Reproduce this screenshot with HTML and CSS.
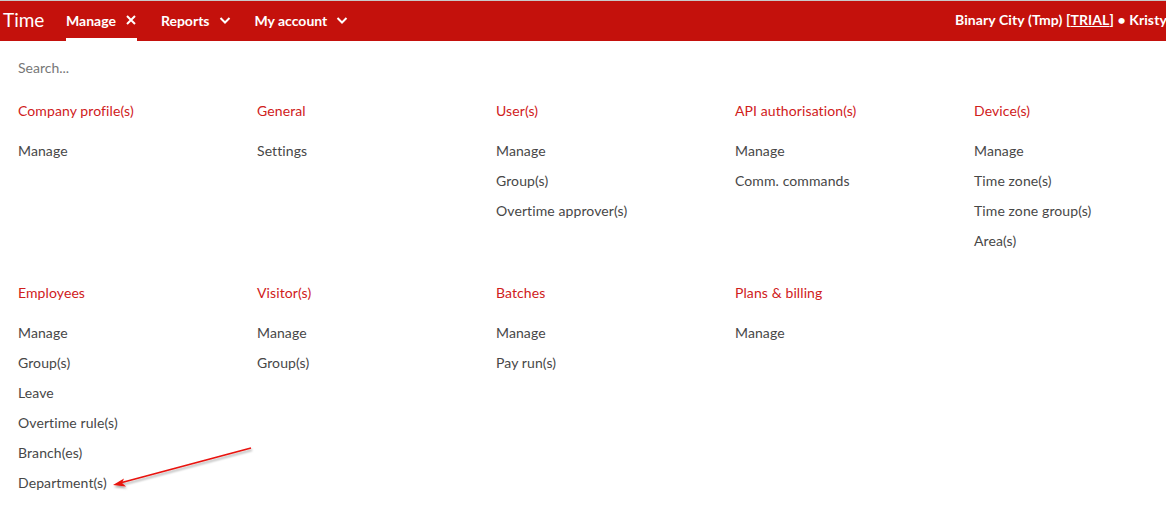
FILE: index.html
```html
<!DOCTYPE html>
<html>
<head>
<meta charset="utf-8">
<link rel="stylesheet" href="styles.css">
</head>
<body>
<header class="topbar">
  <div class="brand">Time</div>
  <nav class="nav">
    <div class="nav-item active">Manage
      <svg class="ico" width="12" height="12" viewBox="0 0 12 12"><path d="M2 2 L10 10 M10 2 L2 10" stroke="#fff" stroke-width="2" fill="none"/></svg>
    </div>
    <div class="nav-item">Reports
      <svg class="ico" width="12" height="12" viewBox="0 0 12 12"><path d="M1.5 4 L6 8.5 L10.5 4" stroke="#fff" stroke-width="2" fill="none"/></svg>
    </div>
    <div class="nav-item">My account
      <svg class="ico" width="12" height="12" viewBox="0 0 12 12"><path d="M1.5 4 L6 8.5 L10.5 4" stroke="#fff" stroke-width="2" fill="none"/></svg>
    </div>
  </nav>
  <div class="account">Binary City (Tmp) [<span class="u">TRIAL</span>] • Kristy (Admin)</div>
</header>
<main class="menu">
  <div class="search">Search...</div>
  <div class="grid">
    <section class="col"><h3>Company profile(s)</h3><ul><li>Manage</li></ul></section>
    <section class="col"><h3>General</h3><ul><li>Settings</li></ul></section>
    <section class="col"><h3>User(s)</h3><ul><li>Manage</li><li>Group(s)</li><li>Overtime approver(s)</li></ul></section>
    <section class="col"><h3>API authorisation(s)</h3><ul><li>Manage</li><li>Comm. commands</li></ul></section>
    <section class="col"><h3>Device(s)</h3><ul><li>Manage</li><li>Time zone(s)</li><li>Time zone group(s)</li><li>Area(s)</li></ul></section>
    <section class="col"><h3>Employees</h3><ul><li>Manage</li><li>Group(s)</li><li>Leave</li><li>Overtime rule(s)</li><li>Branch(es)</li><li>Department(s)</li></ul></section>
    <section class="col"><h3>Visitor(s)</h3><ul><li>Manage</li><li>Group(s)</li></ul></section>
    <section class="col"><h3>Batches</h3><ul><li>Manage</li><li>Pay run(s)</li></ul></section>
    <section class="col"><h3>Plans &amp; billing</h3><ul><li>Manage</li></ul></section>
  </div>
</main>
<svg class="arrow" width="1166" height="507" viewBox="0 0 1166 507">
  <defs>
    <filter id="sh" x="-20%" y="-20%" width="140%" height="140%">
      <feDropShadow dx="1" dy="2" stdDeviation="1.2" flood-color="#000" flood-opacity="0.35"/>
    </filter>
  </defs>
  <g filter="url(#sh)">
    <line x1="251" y1="448" x2="120" y2="483" stroke="#e8120c" stroke-width="1.6"/>
    <path d="M113 485 L124 478.5 L122 483 L126 486.5 Z" fill="#e8120c"/>
  </g>
</svg>
</body>
</html>
```
FILE: styles.css
```css
* { box-sizing: border-box; }
html, body { margin: 0; padding: 0; }
body {
  width: 1166px;
  height: 507px;
  overflow: hidden;
  background: #fff;
  font-family: Lato, "Open Sans", "Liberation Sans", sans-serif;
  position: relative;
}
.topbar {
  display: flex;
  align-items: stretch;
  height: 41px;
  background: #c4110c;
  border-top: 1px solid #c9c9c9;
  color: #fff;
  white-space: nowrap;
}
.brand {
  font-size: 19px;
  line-height: 38px;
  padding-left: 3px;
  width: 66px;
}
.nav { display: flex; gap: 24px; }
.nav-item {
  display: flex;
  align-items: center;
  gap: 9px;
  font-size: 14px;
  font-weight: 700;
  height: 40px;
  border-bottom: 3px solid transparent;
  padding-top: 1px;
}
.nav-item.active { border-bottom-color: #fff; }
.ico { display: block; }
.account {
  margin-left: auto;
  font-size: 14px;
  font-weight: 700;
  line-height: 38px;
  width: 211px;
  overflow: hidden;
  letter-spacing: 0.1px;
}
.u { text-decoration: underline; }
.menu { padding: 12px 0 0 18px; }
.search {
  font-size: 14px;
  line-height: 30px;
  color: #777;
  margin-bottom: 13px;
}
.grid {
  display: grid;
  grid-template-columns: repeat(5, 239px);
  row-gap: 22px;
}
.col h3 {
  margin: 0 0 10px;
  font-size: 14px;
  font-weight: 400;
  line-height: 30px;
  color: #d0201b;
  letter-spacing: 0.1px;
}
.col ul { list-style: none; margin: 0; padding: 0; }
.col li {
  font-size: 14px;
  line-height: 30px;
  color: #474747;
  letter-spacing: 0.1px;
}
.arrow { position: absolute; left: 0; top: 0; pointer-events: none; }
```
